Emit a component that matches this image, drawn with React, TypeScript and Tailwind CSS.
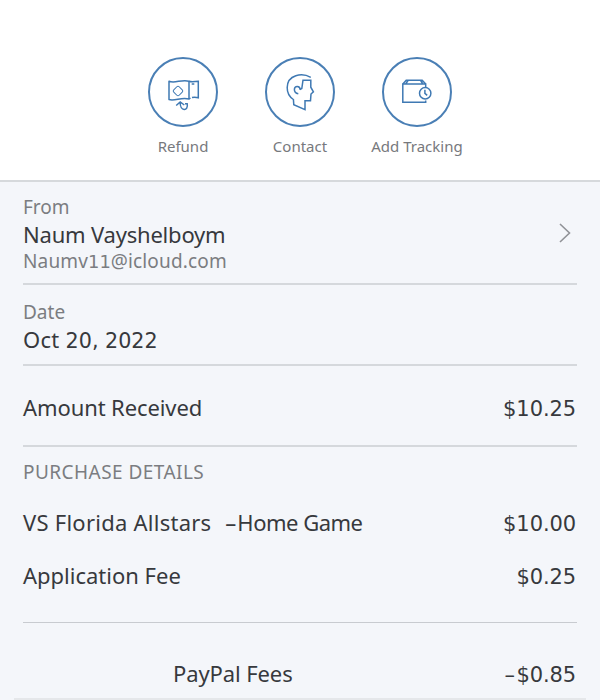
import type { ReactNode } from 'react';
import { clsx } from 'clsx';

const RefundIcon = () => (
  <svg viewBox="0 0 70 70" className="size-full" fill="none" stroke="#3f79b3" strokeWidth="1.5">
    <path d="M21 24.2C27 27 33.5 21.8 41 24.2V42C33.5 39.5 27 44.5 21 42.5Z" strokeLinejoin="round" />
    <path d="M41 24.2C44 25.3 47 24.3 50.3 24.3V40.7C48.3 40.2 46.3 40 44 40.5M41 42L42.5 41M43.7 27H46.3" />
    <rect x="26.2" y="30.2" width="7.6" height="7.6" rx="1.6" strokeWidth="1" transform="rotate(45 30 34)" />
    <path d="M28.2 48.5L32.2 45L36.3 48M32.2 45.3C31.8 54.8 40.8 54.5 39.2 46.8H37" />
  </svg>
);

const ContactIcon = () => (
  <svg viewBox="0 0 70 70" className="size-full" fill="none" stroke="#3f79b3" strokeWidth="1.5">
    <path d="M45.8 20.3C37 15.5 22.5 17.5 22.2 30.5C22.1 35.5 24 39.5 28.4 42.5L28.8 47.8L40 52.7V43.7H45.5L46 37L48.4 34.8L45.8 30.2V23.2H38L36.8 31.5L34.8 32.5" />
    <path d="M35.2 32.8C35 28.3 29.6 28.4 29.4 32.3C29.3 35.2 31.5 36.5 33.3 36.8" />
  </svg>
);

const TrackingIcon = () => (
  <svg viewBox="0 0 70 70" className="size-full" fill="none" stroke="#3f79b3" strokeWidth="1.5">
    <path d="M43.7 30.5V27H20.8V45.3H43.7V43.5M20.8 27L24.2 23.2H40.2L43.7 27M23.7 27L26 23.5M40.8 27L38.7 23.5" />
    <circle cx="43.2" cy="36.2" r="5.7" />
    <path d="M42.9 32.7V36.4L45.2 38.3" />
  </svg>
);

const ACTIONS = [
  { label: 'Refund', Icon: RefundIcon },
  { label: 'Contact', Icon: ContactIcon },
  { label: 'Add Tracking', Icon: TrackingIcon },
];

function Digits({ children }: { children: ReactNode }) {
  return <span className="font-['DejaVu_Sans',sans-serif] text-[0.94em] tracking-normal">{children}</span>;
}

function Row({ label, amount, className }: { label: ReactNode; amount: ReactNode; className?: string }) {
  return (
    <div className={clsx('flex h-7 items-baseline justify-between pr-px', className)}>
      <span className="whitespace-pre">{label}</span>
      <span className="font-['DejaVu_Sans',sans-serif] text-[21px] leading-7 tracking-[-0.1px]">
        {amount}
      </span>
    </div>
  );
}

export default function App() {
  return (
    <main className="flex h-[700px] w-[600px] flex-col overflow-hidden bg-[#f4f6fa] font-['Noto_Sans',sans-serif] text-[22px] leading-7 text-[#37393d]">
      <header className="flex h-[182px] shrink-0 justify-center border-b-2 border-[#d6d9dc] bg-white pt-[57px]">
        {ACTIONS.map(({ label, Icon }) => (
          <button key={label} className="flex w-[117px] flex-col items-center">
            <span className="size-[70px] rounded-full border-2 border-[#4a7fb5]">
              <span className="-m-0.5 block size-[70px]">
                <Icon />
              </span>
            </span>
            <span className="mt-2 whitespace-nowrap text-[15px] leading-[22px] text-[#77797d]">
              {label}
            </span>
          </button>
        ))}
      </header>

      <div className="px-[23px]">
        <section className="flex h-[103px] items-center justify-between border-b-2 border-[#d5d8dc]">
          <div className="flex h-full flex-col pt-[13px]">
            <span className="text-[19px] leading-6 text-[#7b7d81]">From</span>
            <span className="mt-px leading-7 tracking-[-0.2px]">Naum Vayshelboym</span>
            <span className="mt-px text-[19px] leading-6 tracking-[0.15px] text-[#7b7d81]">
              Naumv<Digits>11</Digits>@icloud.com
            </span>
          </div>
          <svg viewBox="0 0 12 20" className="mr-[6px] h-5 w-3" fill="none" stroke="#909297" strokeWidth="1.6">
            <path d="M1 1L10.5 10L1 19" />
          </svg>
        </section>

        <section className="flex h-[81px] flex-col border-b-2 border-[#d5d8dc] pt-[15px]">
          <span className="text-[19px] leading-6 text-[#7b7d81]">Date</span>
          <span className="mt-px tracking-[0.3px]">
            Oct <Digits>20, 2022</Digits>
          </span>
        </section>

        <section className="h-[81px] border-b-2 border-[#d5d8dc] pt-[27px]">
          <Row label={<span className="tracking-[-0.1px]">Amount Received</span>} amount="$10.25" />
        </section>

        <section className="h-44 border-b border-[#c8cbd0] pt-[13px]">
          <h2 className="text-[19px] leading-6 tracking-[0.45px] text-[#7b7d81]">PURCHASE DETAILS</h2>
          <Row
            label={
              <>
                <span className="tracking-[0.25px]">VS Florida Allstars  </span>
                <span className="ml-[2px] tracking-[1px]">–</span>
                <span className="tracking-[-0.5px]">Home Game</span>
              </>
            }
            amount="$10.00"
            className="mt-6"
          />
          <Row label="Application Fee" amount="$0.25" className="mt-[25px]" />
        </section>

        <Row
          label={<span className="tracking-[-0.1px]">PayPal Fees</span>}
          amount={
            <>
              <span className="tracking-[1.5px]">–</span>$0.85
            </>
          }
          className="mt-9 pl-[150px]"
        />
      </div>
      <div className="mx-3.5 mt-auto h-0.5 shrink-0 bg-[#e5e7ea]" />
    </main>
  );
}
